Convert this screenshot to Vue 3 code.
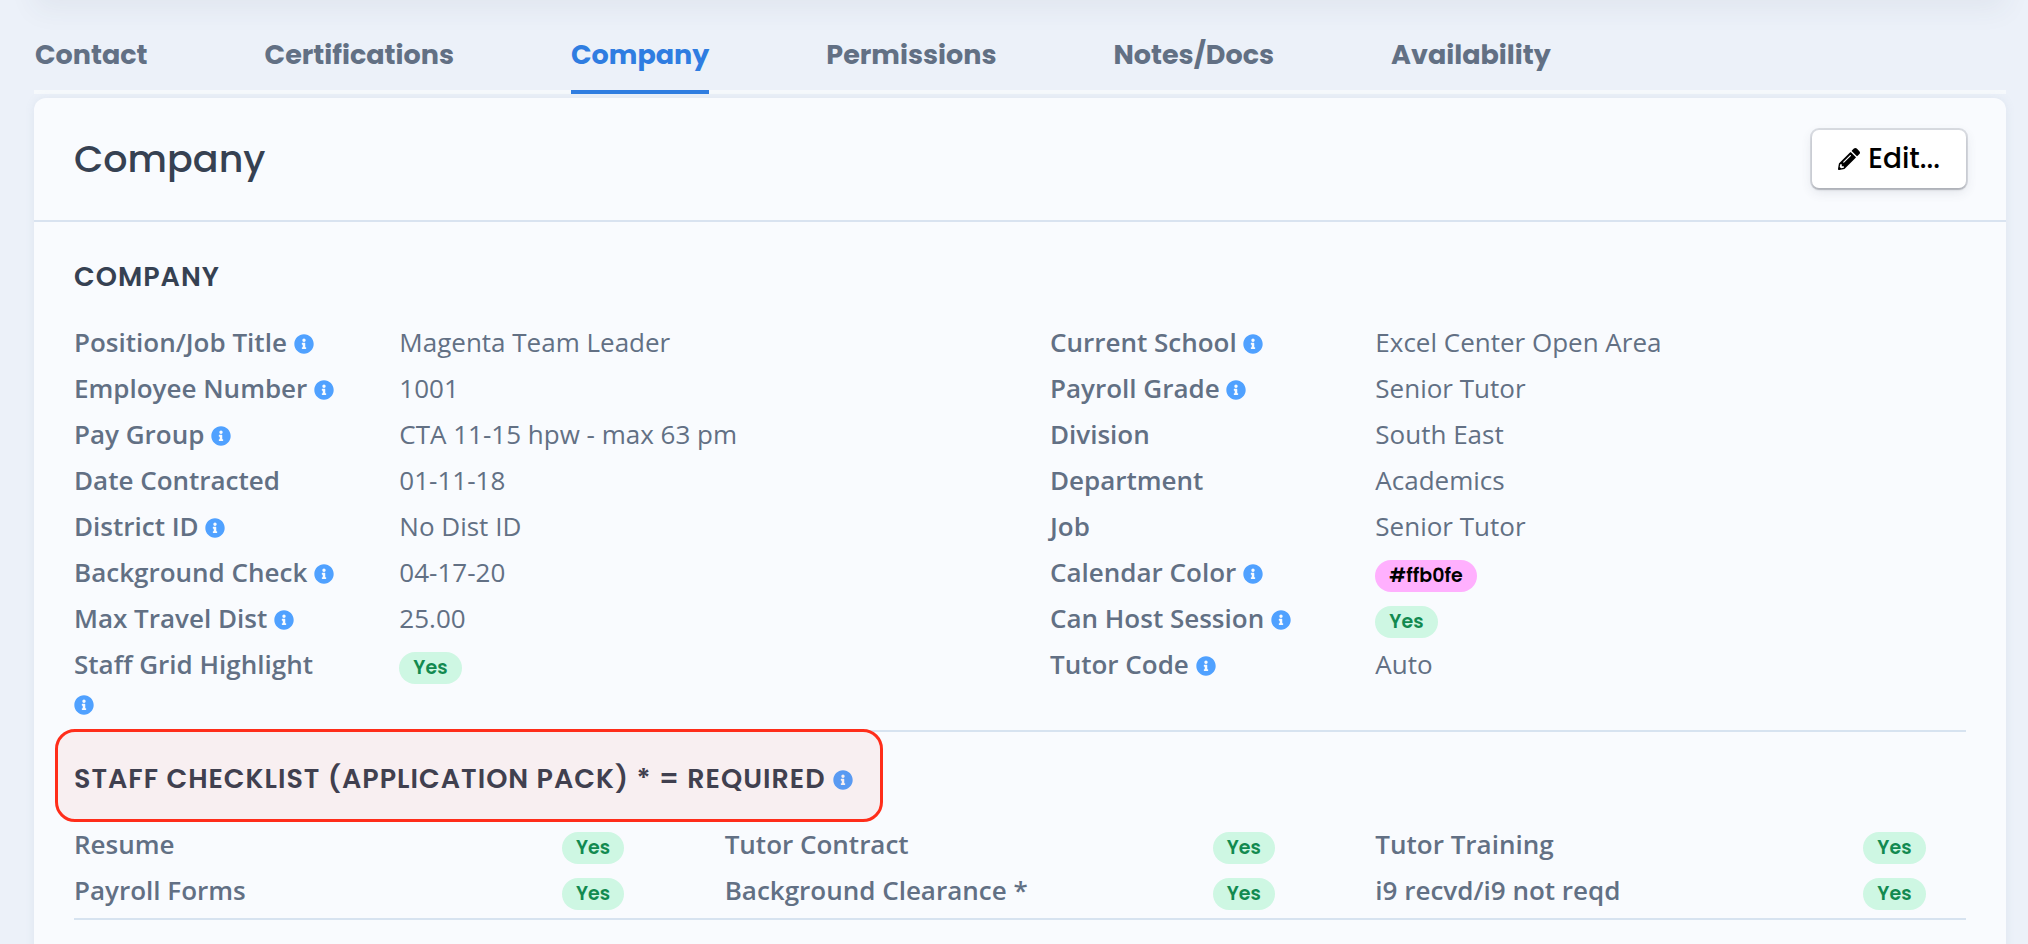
<template>
  <div class="page">
    <!-- Bottom edge of the summary card above the tabs -->
    <div class="summary-edge"></div>

    <nav class="tabs">
      <a
        v-for="tab in tabs"
        :key="tab"
        href="#"
        class="tab"
        :class="{ active: tab === activeTab }"
        @click.prevent="activeTab = tab"
      >{{ tab }}</a>
    </nav>

    <main class="card">
      <header class="card-header">
        <h1>Company</h1>
        <button type="button" class="edit-button">
          <svg class="pencil" viewBox="0 0 512 512" aria-hidden="true"><path :d="pencilPath" /></svg>
          <span>Edit...</span>
        </button>
      </header>

      <div class="card-body">
        <h2>Company</h2>

        <div class="details">
          <dl v-for="(column, index) in details" :key="index">
            <div v-for="field in column" :key="field.label" class="field">
              <dt>
                {{ field.label }}
                <svg v-if="field.info" class="info" viewBox="0 0 512 512" aria-hidden="true"><path :d="infoPath" /></svg>
              </dt>
              <dd>
                <span v-if="field.color" class="badge" :style="{ backgroundColor: field.value }">{{ field.value }}</span>
                <span v-else-if="field.badge" class="badge yes">{{ field.value }}</span>
                <template v-else>{{ field.value }}</template>
              </dd>
            </div>
          </dl>
        </div>

        <hr />

        <h2 class="checklist-title">
          Staff Checklist (Application Pack) * = Required
          <svg class="info" viewBox="0 0 512 512" aria-hidden="true"><path :d="infoPath" /></svg>
          <span class="highlight"></span>
        </h2>

        <dl class="checklist">
          <div v-for="item in checklist" :key="item" class="check">
            <dt>{{ item }}</dt>
            <dd><span class="badge yes">Yes</span></dd>
          </div>
        </dl>

        <hr />
      </div>
    </main>
  </div>
</template>

<script setup>
import { ref } from 'vue';

const tabs = ['Contact', 'Certifications', 'Company', 'Permissions', 'Notes/Docs', 'Availability'];
const activeTab = ref('Company');

// One array per column
const details = ref([
  [
    { label: 'Position/Job Title', value: 'Magenta Team Leader', info: true },
    { label: 'Employee Number', value: '1001', info: true },
    { label: 'Pay Group', value: 'CTA 11-15 hpw - max 63 pm', info: true },
    { label: 'Date Contracted', value: '01-11-18' },
    { label: 'District ID', value: 'No Dist ID', info: true },
    { label: 'Background Check', value: '04-17-20', info: true },
    { label: 'Max Travel Dist', value: '25.00', info: true },
    { label: 'Staff Grid Highlight', value: 'Yes', info: true, badge: true }
  ],
  [
    { label: 'Current School', value: 'Excel Center Open Area', info: true },
    { label: 'Payroll Grade', value: 'Senior Tutor', info: true },
    { label: 'Division', value: 'South East' },
    { label: 'Department', value: 'Academics' },
    { label: 'Job', value: 'Senior Tutor' },
    { label: 'Calendar Color', value: '#ffb0fe', info: true, color: true },
    { label: 'Can Host Session', value: 'Yes', info: true, badge: true },
    { label: 'Tutor Code', value: 'Auto', info: true }
  ]
]);

const checklist = ref([
  'Resume',
  'Tutor Contract',
  'Tutor Training',
  'Payroll Forms',
  'Background Clearance *',
  'i9 recvd/i9 not reqd'
]);

const infoPath = 'M256 8C119.043 8 8 119.083 8 256c0 136.997 111.043 248 248 248s248-111.003 248-248C504 119.083 392.957 8 256 8zm0 110c23.196 0 42 18.804 42 42s-18.804 42-42 42-42-18.804-42-42 18.804-42 42-42zm56 254c0 6.627-5.373 12-12 12h-88c-6.627 0-12-5.373-12-12v-24c0-6.627 5.373-12 12-12h12v-64h-12c-6.627 0-12-5.373-12-12v-24c0-6.627 5.373-12 12-12h64c6.627 0 12 5.373 12 12v100h12c6.627 0 12 5.373 12 12v24z';
const pencilPath = 'M497.9 142.1l-46.1 46.1c-4.7 4.7-12.3 4.7-17 0l-111-111c-4.7-4.7-4.7-12.3 0-17l46.1-46.1c18.7-18.7 49.1-18.7 67.9 0l60.1 60.1c18.8 18.7 18.8 49.1 0 67.9zM284.2 99.8L21.6 362.4.4 483.9c-2.9 16.4 11.4 30.6 27.8 27.8l121.5-21.3 262.6-262.6c4.7-4.7 4.7-12.3 0-17l-111-111c-4.8-4.7-12.4-4.7-17.1 0zM124.1 339.9c-5.5-5.5-5.5-14.3 0-19.8l154-154c5.5-5.5 14.3-5.5 19.8 0s5.5 14.3 0 19.8l-154 154c-5.5 5.5-14.3 5.5-19.8 0zM88 424h48v36.3l-64.5 11.3-31.1-31.1L51.7 376H88v48z';
</script>

<style>
body {
  margin: 0;
  background: #ecf1f9;
}
</style>

<style scoped>
.page {
  display: flex;
  flex-direction: column;
  box-sizing: border-box;
  min-height: 100vh;
  padding: 0 22px 0 34px;
  overflow: hidden;
  color: #627084;
  font-family: "Open Sans", sans-serif;
  font-size: 26px;
  line-height: 39px;
}

.summary-edge {
  height: 60px;
  margin-top: -60px;
  box-shadow: 0 10px 28px rgba(50, 60, 90, 0.06);
}

/* Tabs */
.tabs {
  display: flex;
  gap: 117px;
  padding: 34px 1px 0;
  border-bottom: 4px solid #f6f9fc;
  font-family: Poppins, Inter, sans-serif;
}

.tab {
  margin-bottom: -4px;
  padding-bottom: 14px;
  border-bottom: 4px solid transparent;
  color: #627084;
  font-size: 27px;
  font-weight: 700;
  line-height: 42px;
  text-decoration: none;
}

.tab.active {
  border-color: #2f7de1;
  color: #2f7de1;
}

/* Card */
.card {
  flex: 1;
  margin-top: 4px;
  border-radius: 12px 12px 0 0;
  background: #f9fbfe;
  box-shadow: 0 0 10px rgba(120, 150, 170, 0.12);
}

.card-header {
  display: flex;
  align-items: center;
  justify-content: space-between;
  height: 122px;
  padding: 0 40px;
  border-bottom: 2px solid #d9e3f0;
}

h1,
h2 {
  margin: 0;
  color: #364152;
  font-family: Poppins, Inter, sans-serif;
}

h1 {
  font-size: 38px;
  font-weight: 500;
  line-height: 60px;
}

h2 {
  font-size: 27px;
  font-weight: 600;
  letter-spacing: 1px;
  text-transform: uppercase;
}

.edit-button {
  display: flex;
  align-items: center;
  gap: 8px;
  height: 58px;
  padding: 0 26px;
  border: 0;
  border-radius: 7px;
  background: #fff;
  box-shadow: 0 0 0 2px rgba(60, 66, 87, 0.16), 0 2px 2px rgba(0, 0, 0, 0.16), 0 4px 12px rgba(60, 66, 87, 0.12);
  color: #000;
  font-family: Poppins, Inter, sans-serif;
  font-size: 28px;
  font-weight: 500;
}

.pencil {
  width: 22px;
  height: 24px;
}

.card-body {
  padding: 35px 40px;
}

/* Label / value columns */
.details {
  display: grid;
  grid-template-columns: repeat(2, 1fr);
  column-gap: 60px;
  margin-top: 27px;
}

dl,
dd {
  margin: 0;
}

.field {
  display: grid;
  grid-template-columns: repeat(3, 1fr);
  column-gap: 60px;
  min-height: 46px;
}

.field dt {
  padding-bottom: 7px;
  font-weight: 600;
}

.field dd {
  grid-column: span 2;
}

.info {
  width: 20px;
  height: 20px;
  fill: #50a1ff;
  vertical-align: -2px;
}

.badge {
  display: block;
  width: fit-content;
  margin-top: 7px;
  padding: 0 14px;
  border-radius: 16px;
  color: #000;
  font-family: Poppins, Inter, sans-serif;
  font-size: 19px;
  font-weight: 600;
  line-height: 32px;
}

.badge.yes {
  background: #cef7e3;
  color: #128a50;
}

hr {
  height: 2px;
  margin: 0;
  border: 0;
  background: #d7e3f0;
}

/* Staff checklist */
.checklist-title {
  position: relative;
  width: fit-content;
  margin-top: 27px;
}

.highlight {
  position: absolute;
  inset: -30px -30px -24px -19px;
  border: 3px solid #ff2d1a;
  border-radius: 20px;
  background: rgba(245, 50, 30, 0.06);
  pointer-events: none;
}

.checklist {
  display: grid;
  grid-template-columns: repeat(3, 1fr);
  column-gap: 60px;
  margin: 27px 0 1px;
}

.check {
  display: grid;
  grid-template-columns: repeat(4, 1fr);
  column-gap: 60px;
  min-height: 46px;
}

.check dt {
  grid-column: span 3;
  font-weight: 600;
}
</style>
